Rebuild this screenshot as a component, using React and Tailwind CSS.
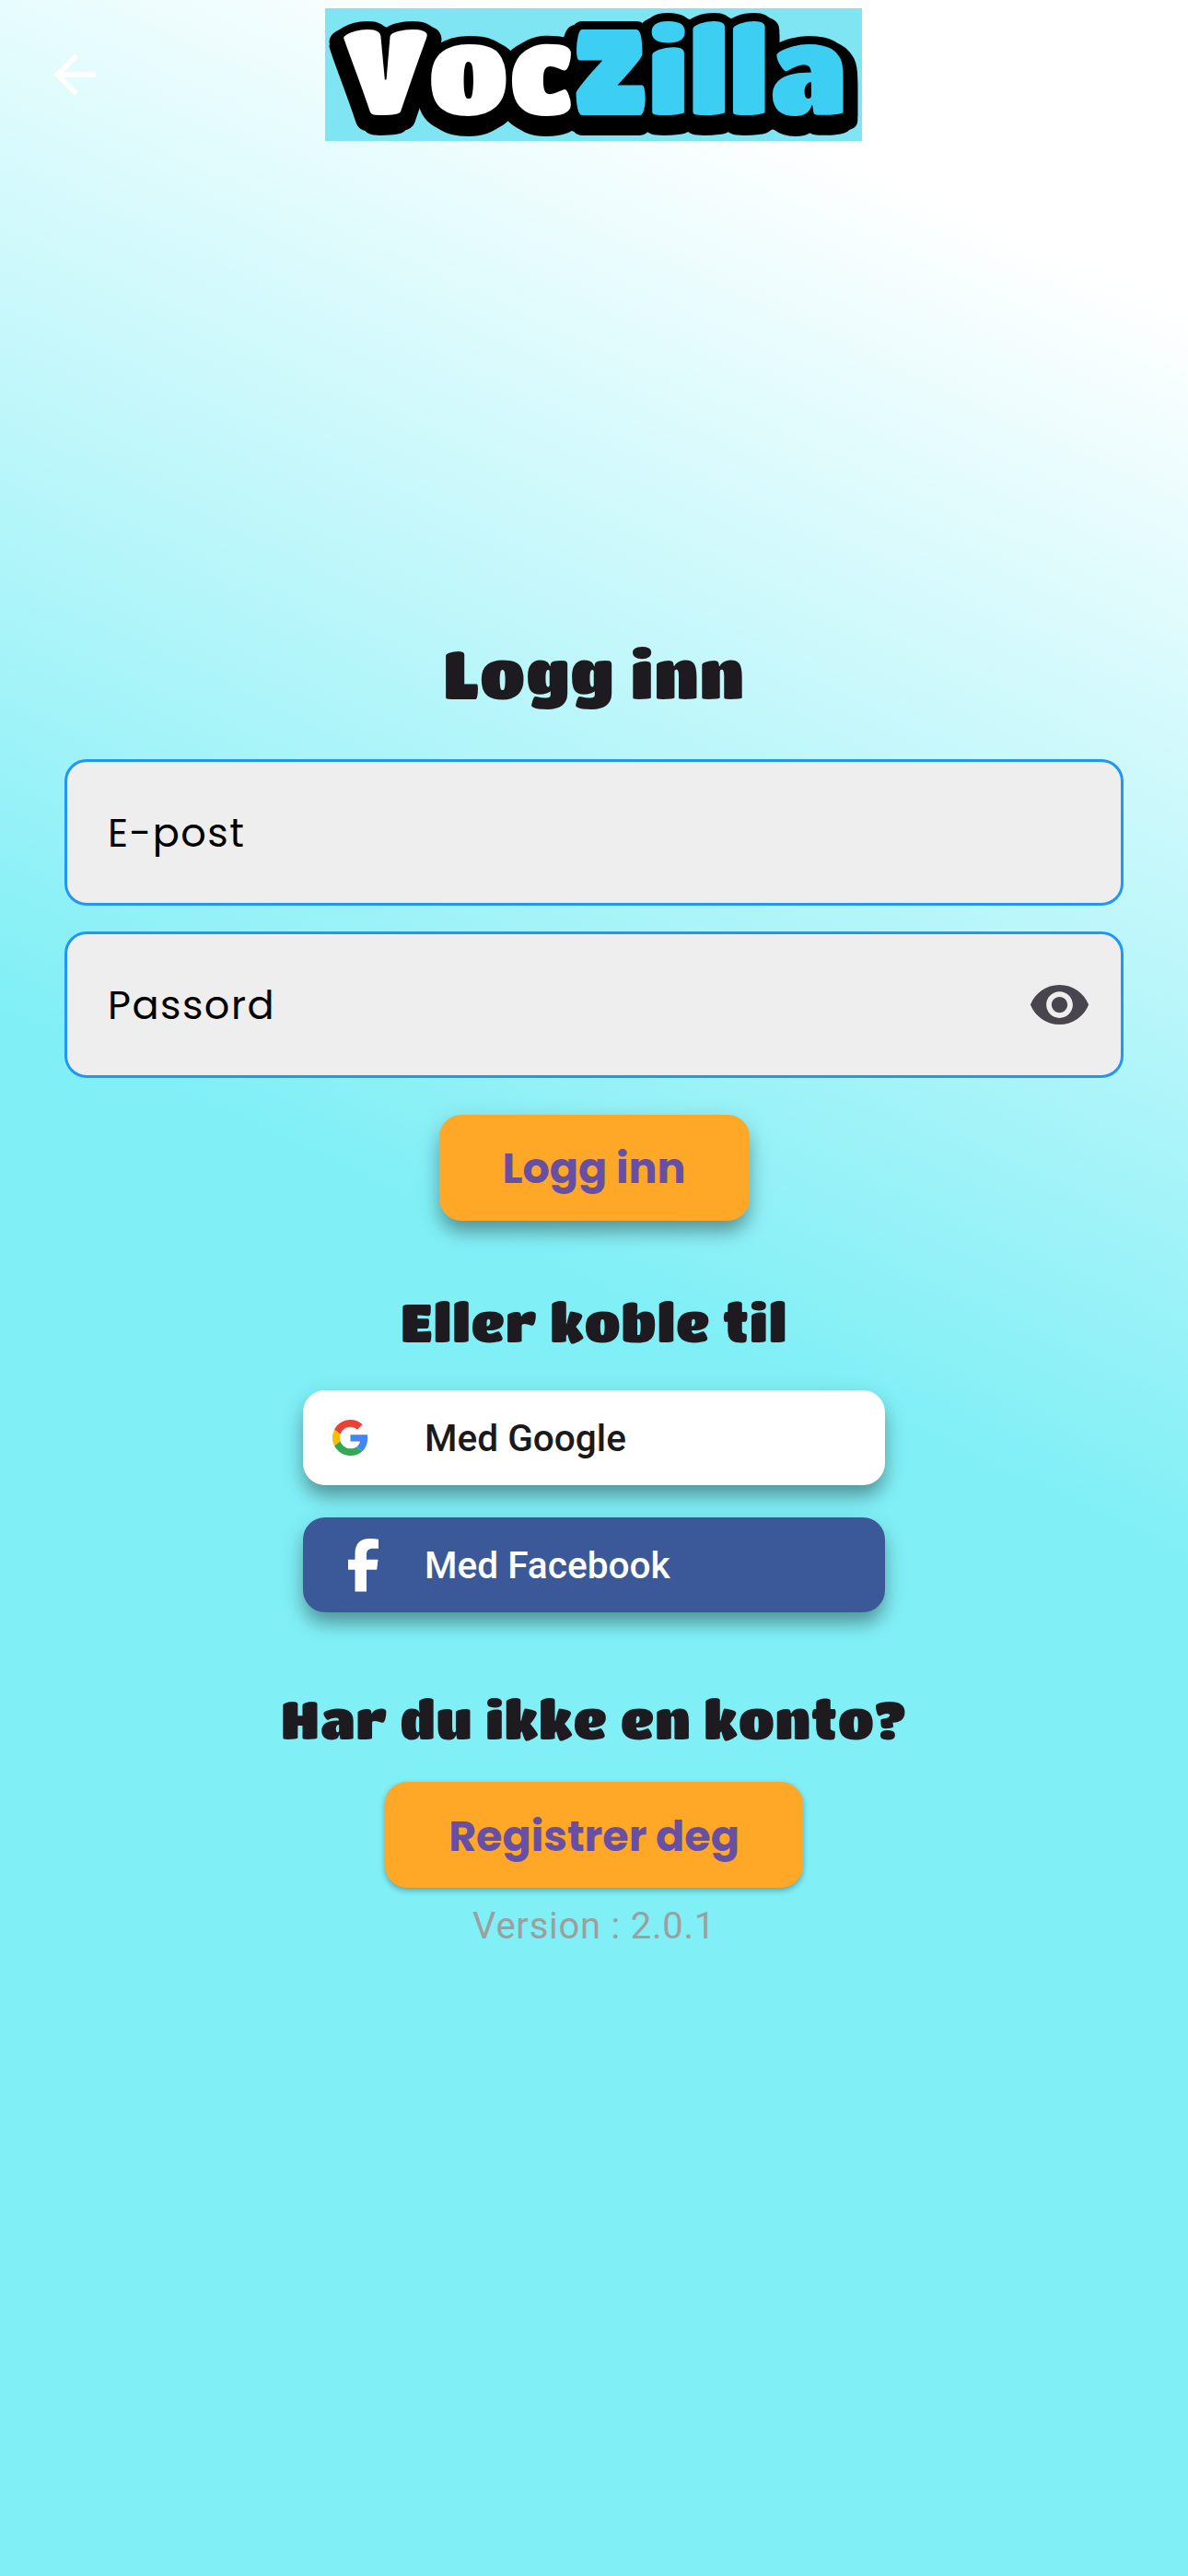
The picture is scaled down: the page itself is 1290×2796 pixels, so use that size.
import React from "react";
import { MdArrowBack, MdVisibility } from "react-icons/md";

const RAISED = "shadow-[0_9px_26px_rgba(0,0,0,0.2),0_14px_18px_-3px_rgba(0,0,0,0.24)]";

function Heading({ children, className }) {
  return (
    <h2
      className={
        "flex justify-center whitespace-nowrap font-['Titan_One','Inter',sans-serif] tracking-[0.75px] text-[#1d1b20] " +
        className
      }
    >
      {children}
    </h2>
  );
}

function Logo() {
  return (
    <svg viewBox="0 0 583 144" className="block h-[144px] w-[583px] overflow-visible">
      <defs>
        <linearGradient id="logoFill" gradientUnits="userSpaceOnUse" x1="0" y1="0" x2="583" y2="0">
          <stop offset="0.463" stopColor="#ffffff" />
          <stop offset="0.463" stopColor="#3dcff3" />
        </linearGradient>
        <filter
          id="logoDepth"
          filterUnits="userSpaceOnUse"
          x="0"
          y="0"
          width="583"
          height="144"
          colorInterpolationFilters="sRGB"
        >
          <feOffset in="SourceAlpha" dx="-7" dy="4" result="left" />
          <feOffset in="SourceAlpha" dx="7" dy="4" result="right" />
          <feOffset in="SourceAlpha" dx="-7" dy="9" result="lowLeft" />
          <feOffset in="SourceAlpha" dx="7" dy="9" result="lowRight" />
          <feOffset in="SourceAlpha" dy="13" result="bottom" />
          <feMerge>
            <feMergeNode in="left" />
            <feMergeNode in="right" />
            <feMergeNode in="lowLeft" />
            <feMergeNode in="lowRight" />
            <feMergeNode in="bottom" />
            <feMergeNode in="SourceGraphic" />
          </feMerge>
        </filter>
      </defs>
      <rect width="583" height="144" fill="#80e5f2" />
      <text
        x="19"
        y="115.5"
        textLength="548"
        lengthAdjust="spacingAndGlyphs"
        fontFamily="'Titan One', Roboto, sans-serif"
        fontSize="131"
        fill="url(#logoFill)"
        stroke="#000"
        strokeWidth="18"
        strokeLinejoin="round"
        paintOrder="stroke"
        filter="url(#logoDepth)"
      >
        VocZilla
      </text>
    </svg>
  );
}

function GoogleIcon() {
  return (
    <svg viewBox="0 0 48 48" className="size-[39px]">
      <path fill="#EA4335" d="M24 9.5c3.54 0 6.71 1.22 9.21 3.6l6.85-6.85C35.9 2.38 30.47 0 24 0 14.62 0 6.51 5.38 2.56 13.22l7.98 6.19C12.43 13.72 17.74 9.5 24 9.5z" />
      <path fill="#4285F4" d="M46.98 24.55c0-1.57-.15-3.09-.38-4.55H24v9.02h12.94c-.58 2.96-2.26 5.48-4.78 7.18l7.73 6c4.51-4.18 7.09-10.36 7.09-17.65z" />
      <path fill="#FBBC05" d="M10.53 28.59c-.48-1.45-.76-2.99-.76-4.59s.27-3.14.76-4.59l-7.98-6.19C.92 16.46 0 20.12 0 24c0 3.88.92 7.54 2.56 10.78l7.97-6.19z" />
      <path fill="#34A853" d="M24 48c6.48 0 11.93-2.13 15.89-5.81l-7.73-6c-2.15 1.45-4.92 2.3-8.16 2.3-6.26 0-11.57-4.22-13.47-9.91l-7.98 6.19C6.51 42.62 14.62 48 24 48z" />
    </svg>
  );
}

function FacebookIcon() {
  return (
    <svg viewBox="0 0 33 58" className="ml-[17px] h-[58px] w-[33px]">
      <path fill="#fff" d="M7.5 57.5V33.7H0V22.7H7.5V17C7.5 5 13.5 0 23 0c4 0 8 .3 10 .8V10.7H27c-5 0-7 2-7 7v5H32.5L31.2 33.7H20V57.5z" />
    </svg>
  );
}

function Field({ label, children, className }) {
  return (
    <div
      className={
        "flex h-[159px] w-[1150px] items-center justify-between rounded-[24px] border-[3px] border-[#2196f3] bg-[#eeeeee] pl-[44px] pr-[32px] " +
        className
      }
    >
      <span className="pt-px font-['Poppins','Inter',sans-serif] text-[43px] tracking-[1.5px] text-black">{label}</span>
      {children}
    </div>
  );
}

function SocialButton({ icon, label, className }) {
  return (
    <button
      className={
        "grid h-[103px] w-[632px] grid-cols-[100px_1fr] items-center rounded-[24px] pl-[32px] text-left font-['Roboto',sans-serif] text-[40.6px] font-medium " +
        RAISED +
        " " +
        className
      }
    >
      {icon}
      <span className="pt-px">{label}</span>
    </button>
  );
}

export default function App() {
  return (
    <div className="flex h-[2796px] w-[1290px] flex-col items-center overflow-hidden bg-[linear-gradient(204.77deg,#ffffff_10%,#80eff6_50%)]">
      <header className="grid h-[162px] w-full shrink-0 grid-cols-[353px_583px_1fr] items-center">
        <MdArrowBack className="ml-[47px] size-[68px] text-white" />
        <Logo />
      </header>

      <Heading className="mt-[529px] h-[80px] items-center text-[72px]">Logg inn</Heading>

      <Field label="E-post" className="mt-[53px]" />
      <Field label="Passord" className="mt-[28px]">
        <MdVisibility className="size-[69px] text-[#49454f]" />
      </Field>

      <button
        className={
          "mt-[40px] h-[115px] w-[337px] rounded-[24px] bg-[#ffa726] pt-0.5 font-['Poppins','Inter',sans-serif] text-[46px] font-bold text-[#6750a4] " +
          RAISED
        }
      >
        Logg inn
      </button>

      <Heading className="mt-[79px] h-[60px] items-center text-[57.5px]">Eller koble til</Heading>

      <SocialButton icon={<GoogleIcon />} label="Med Google" className="mt-[45px] bg-white text-[#1a1a1a]" />
      <SocialButton icon={<FacebookIcon />} label="Med Facebook" className="mt-[35px] bg-[#3b5998] text-white" />

      <Heading className="mt-[85px] h-[60px] items-center text-[57.5px]">Har du ikke en konto?</Heading>

      <button className="mt-[39px] h-[115px] w-[454px] rounded-[24px] bg-[#ffa726] pt-[3px] font-['Poppins','Inter',sans-serif] text-[46px] font-bold text-[#6750a4] shadow-[0_3px_6px_rgba(0,0,0,0.3)]">
        Registrer deg
      </button>

      <p className="mt-[18px] font-['Roboto',sans-serif] text-[40px] leading-[48px] tracking-[0.75px] text-[#9e9e9e]">
        Version : 2.0.1
      </p>
    </div>
  );
}
